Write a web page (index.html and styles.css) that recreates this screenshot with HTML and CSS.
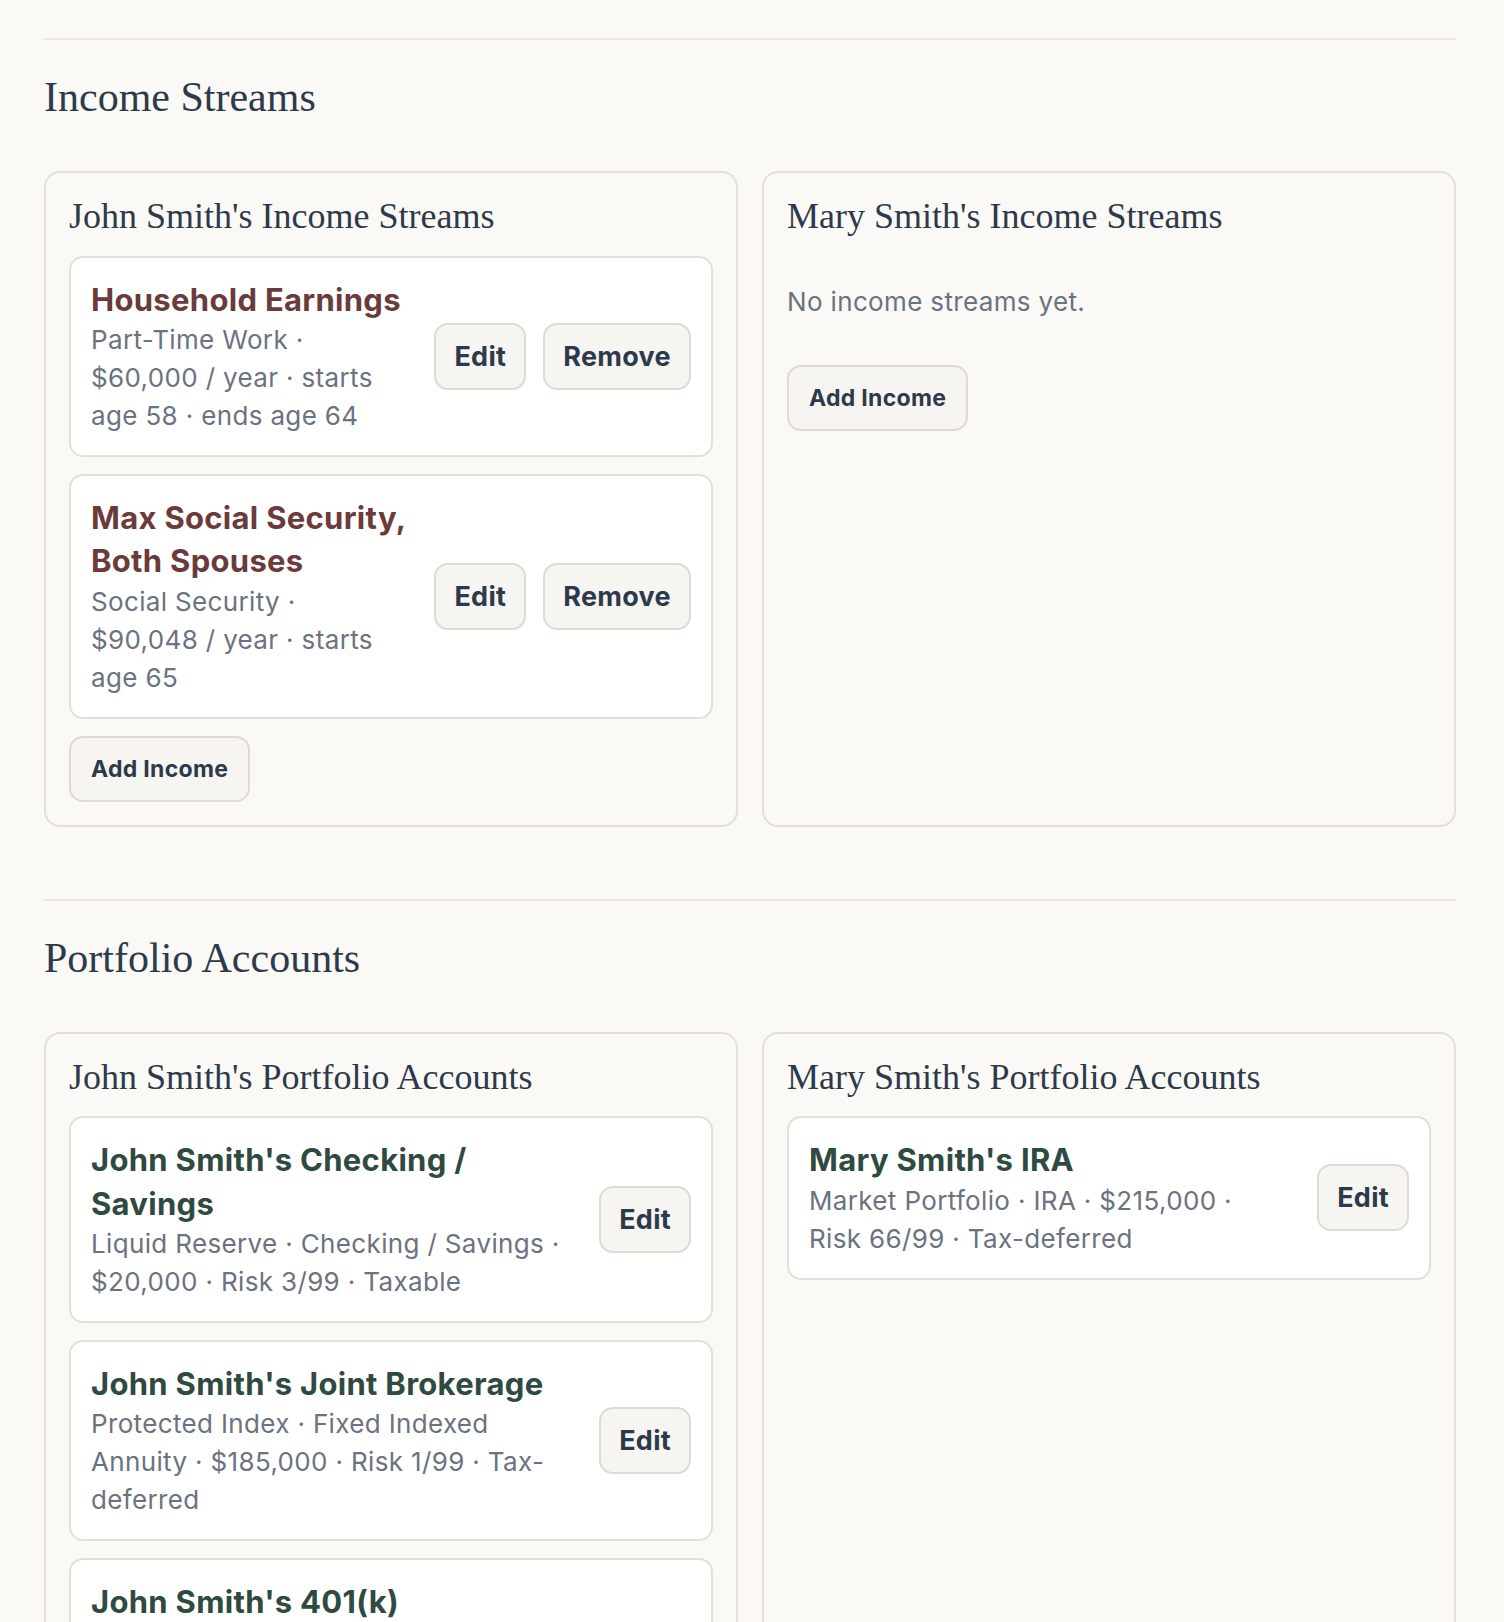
FILE: index.html
```html
<!DOCTYPE html>
<html lang="en">
<head>
    <meta charset="UTF-8">
    <meta name="viewport" content="width=device-width, initial-scale=1.0">
    <title>Plan Inputs</title>
    <link rel="stylesheet" href="styles.css">
</head>
<body>
    <main class="page">

        <!-- Income streams per spouse -->
        <section class="plan-section">
            <h2 class="section-title">Income Streams</h2>
            <div class="spouse-grid">
                <div class="spouse-card">
                    <h3 class="spouse-title">John Smith's Income Streams</h3>
                    <div class="item-list">
                        <div class="item-card">
                            <div class="item-info">
                                <div class="item-name income">Household Earnings</div>
                                <div class="item-meta">Part-Time Work · $60,000 / year · starts age 58 · ends age 64</div>
                            </div>
                            <div class="item-actions">
                                <button class="btn">Edit</button>
                                <button class="btn">Remove</button>
                            </div>
                        </div>
                        <div class="item-card">
                            <div class="item-info">
                                <div class="item-name income">Max Social Security, Both Spouses</div>
                                <div class="item-meta">Social Security · $90,048 / year · starts age 65</div>
                            </div>
                            <div class="item-actions">
                                <button class="btn">Edit</button>
                                <button class="btn">Remove</button>
                            </div>
                        </div>
                        <div>
                            <button class="btn btn-small">Add Income</button>
                        </div>
                    </div>
                </div>

                <div class="spouse-card">
                    <h3 class="spouse-title">Mary Smith's Income Streams</h3>
                    <p class="empty-note">No income streams yet.</p>
                    <div>
                        <button class="btn btn-small">Add Income</button>
                    </div>
                </div>
            </div>
        </section>

        <!-- Portfolio accounts per spouse -->
        <section class="plan-section">
            <h2 class="section-title">Portfolio Accounts</h2>
            <div class="spouse-grid">
                <div class="spouse-card">
                    <h3 class="spouse-title">John Smith's Portfolio Accounts</h3>
                    <div class="item-list">
                        <div class="item-card">
                            <div class="item-info">
                                <div class="item-name account">John Smith's Checking / Savings</div>
                                <div class="item-meta">Liquid Reserve · Checking / Savings · $20,000 · Risk 3/99 · Taxable</div>
                            </div>
                            <div class="item-actions">
                                <button class="btn">Edit</button>
                            </div>
                        </div>
                        <div class="item-card">
                            <div class="item-info">
                                <div class="item-name account">John Smith's Joint Brokerage</div>
                                <div class="item-meta">Protected Index · Fixed Indexed Annuity · $185,000 · Risk 1/99 · Tax-deferred</div>
                            </div>
                            <div class="item-actions">
                                <button class="btn">Edit</button>
                            </div>
                        </div>
                        <div class="item-card">
                            <div class="item-info">
                                <div class="item-name account">John Smith's 401(k)</div>
                                <div class="item-meta">Growth Portfolio · Employer 401(k) Plan · $340,000 · Risk 72/99 · Tax-deferred · Employer match 4%</div>
                            </div>
                            <div class="item-actions">
                                <button class="btn">Edit</button>
                            </div>
                        </div>
                    </div>
                </div>

                <div class="spouse-card">
                    <h3 class="spouse-title">Mary Smith's Portfolio Accounts</h3>
                    <div class="item-list">
                        <div class="item-card">
                            <div class="item-info">
                                <div class="item-name account">Mary Smith's IRA</div>
                                <div class="item-meta">Market Portfolio · IRA · $215,000 · Risk 66/99 · Tax-deferred</div>
                            </div>
                            <div class="item-actions">
                                <button class="btn">Edit</button>
                            </div>
                        </div>
                    </div>
                </div>
            </div>
        </section>

    </main>
</body>
</html>
```

FILE: styles.css
```css
/* Base */
body {
    margin: 0;
    background: #faf9f5;
    color: #2c3a4b;
    font-family: 'Inter', 'Noto Sans', sans-serif;
}

.page {
    width: 1412px;
    margin-left: 44px;
}

/* Sections */
.plan-section {
    border-top: 2px solid #e9e7e0;
    margin-top: 38px;
    padding-top: 32px;
}

.plan-section + .plan-section {
    margin-top: 72px;
}

.section-title {
    font-family: 'Liberation Serif', serif;
    font-weight: 400;
    font-size: 42px;
    line-height: 1.2;
    color: #2c3a4b;
    margin: 0 0 49px 0;
}

/* Two columns, one per spouse */
.spouse-grid {
    display: grid;
    grid-template-columns: 1fr 1fr;
    gap: 24px;
    align-items: stretch;
}

.spouse-card {
    border: 2px solid #e3e0d7;
    border-radius: 16px;
    padding: 23px;
    background: #faf9f5;
}

.spouse-title {
    font-family: 'Liberation Serif', serif;
    font-weight: 400;
    font-size: 36px;
    line-height: 1.12;
    color: #2c3a4b;
    margin: 0 0 19px 0;
}

.item-list {
    display: flex;
    flex-direction: column;
    gap: 17px;
}

/* Single income / account row */
.item-card {
    display: flex;
    align-items: center;
    gap: 26px;
    background: #fff;
    border: 2px solid #e3e0d7;
    border-radius: 14px;
    padding: 20px;
}

.item-info {
    flex: 1;
    min-width: 0;
}

.item-name {
    font-size: 31px;
    font-weight: 700;
    line-height: 1.4;
    letter-spacing: 0.3px;
}

.item-name.income {
    color: #6b3b3b;
}

.item-name.account {
    color: #2f4a40;
}

.item-meta {
    font-size: 26px;
    line-height: 1.46;
    letter-spacing: 0.35px;
    color: #6b7280;
}

.item-actions {
    display: flex;
    gap: 17px;
    flex-shrink: 0;
}

/* Buttons */
.btn {
    display: inline-flex;
    align-items: center;
    height: 67px;
    padding: 0 18px;
    border: 2px solid #dedbd1;
    border-radius: 14px;
    background: #f6f5f1;
    color: #2c3a4b;
    font-family: 'Inter', 'Noto Sans', sans-serif;
    font-size: 27px;
    font-weight: 700;
    letter-spacing: 0.3px;
    cursor: pointer;
}

.btn-small {
    height: 66px;
    padding: 0 20px;
    font-size: 23px;
}

.empty-note {
    font-size: 26px;
    line-height: 1.46;
    letter-spacing: 0.35px;
    color: #6b7280;
    margin: 46px 0 44px 0;
}
```
